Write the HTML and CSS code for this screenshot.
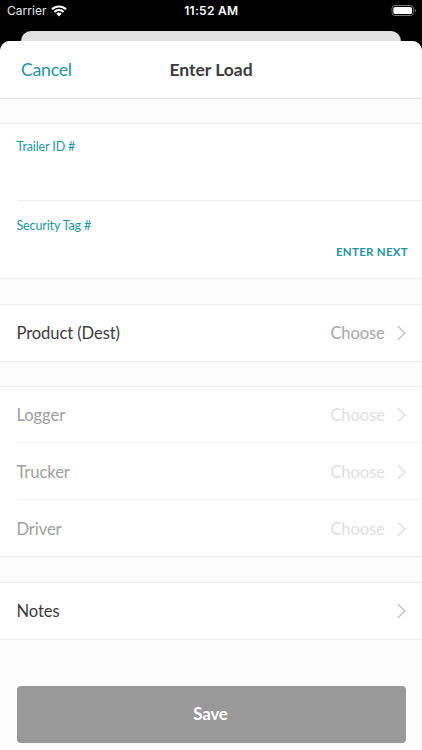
FILE: index.html
```html
<!DOCTYPE html>
<html lang="en">
<head>
<meta charset="utf-8">
<title>Enter Load</title>
<link rel="stylesheet" href="styles.css">
</head>
<body>
<div class="status">
  <div class="carrier"><span>Carrier</span>
    <svg width="16" height="12" viewBox="0 0 16 12" fill="none" stroke="#fff" stroke-width="2.1"><path d="M1 4.3A10 10 0 0 1 15 4.3M3.4 6.9A6.6 6.6 0 0 1 12.6 6.9"/><path d="M5.4 8.8A3.8 3.8 0 0 1 10.6 8.8L8 11.5Z" fill="#fff" stroke="none"/></svg>
  </div>
  <span class="time">11:52 AM</span>
  <svg class="battery" width="26" height="12" viewBox="0 0 26 12"><rect x="1" y=".5" width="21.4" height="10" rx="3" fill="none" stroke="#777"/><rect x="2.4" y="1.9" width="18.6" height="7.2" rx="1.7" fill="#fff"/><path d="M23.8 3.8Q25 4.3 25 5.5T23.8 7.2Z" fill="#777"/></svg>
</div>
<div class="back-card"></div>
<main class="sheet">
  <header class="header"><span class="cancel">Cancel</span><h1 class="title">Enter Load</h1><span></span></header>
  <section class="group fields">
    <div class="field trailer"><label>Trailer ID #</label></div>
    <div class="field tag"><label>Security Tag #</label><span class="next">ENTER NEXT</span></div>
  </section>
  <section class="group">
    <div class="row"><span class="name">Product (Dest)</span><span class="choose">Choose</span><svg class="chevron" width="9" height="16" viewBox="0 0 9 16"><path d="M1 1.2L7.8 8L1 14.8"/></svg></div>
  </section>
  <section class="group disabled">
    <div class="row"><span class="name">Logger</span><span class="choose">Choose</span><svg class="chevron" width="9" height="16" viewBox="0 0 9 16"><path d="M1 1.2L7.8 8L1 14.8"/></svg></div>
    <div class="row"><span class="name">Trucker</span><span class="choose">Choose</span><svg class="chevron" width="9" height="16" viewBox="0 0 9 16"><path d="M1 1.2L7.8 8L1 14.8"/></svg></div>
    <div class="row"><span class="name">Driver</span><span class="choose">Choose</span><svg class="chevron" width="9" height="16" viewBox="0 0 9 16"><path d="M1 1.2L7.8 8L1 14.8"/></svg></div>
  </section>
  <section class="group">
    <div class="row"><span class="name">Notes</span><svg class="chevron" width="9" height="16" viewBox="0 0 9 16"><path d="M1 1.2L7.8 8L1 14.8"/></svg></div>
  </section>
  <button class="save">Save</button>
</main>
</body>
</html>
```
FILE: styles.css
```css
* { box-sizing: border-box; }
body {
  margin: 0;
  height: 750px;
  overflow: hidden;
  background: #000;
  color: #3c3c3e;
  font-family: Lato, sans-serif;
  font-size: 16.6px;
}
.status {
  display: grid;
  grid-template-columns: 1fr auto 1fr;
  align-items: center;
  height: 31px;
  padding: 0 5px 9px 7px;
  color: #fff;
  font: 12px/22px Inter, sans-serif;
}
.carrier { display: flex; align-items: center; gap: 4px; letter-spacing: .05px; color: #e8e8e8; }
.time { position: relative; left: -.7px; font-weight: 600; letter-spacing: .3px; }
.battery { justify-self: end; }
.back-card {
  height: 10px;
  margin: 0 21px;
  border-radius: 10px 10px 0 0;
  background: #e1e1e1;
}
.sheet {
  height: 709px;
  border-radius: 10px 10px 0 0;
  background: #fcfcfc;
  overflow: hidden;
}
.header {
  display: grid;
  grid-template-columns: 1fr auto 1fr;
  align-items: center;
  height: 58px;
  padding: 0 21px 1px;
  background: #fff;
  border-bottom: 1px solid #e2e2e2;
}
.cancel { color: #2196a6; font-size: 17.7px; letter-spacing: -.25px; }
.title { margin: 0; font-size: 17.5px; font-weight: 700; letter-spacing: -.02px; }
.group {
  margin-top: 25px;
  padding-left: 16.5px;
  background: #fff;
  border-top: 1px solid #ededed;
  border-bottom: 1px solid #ededed;
}
.fields { margin-top: 24px; }
.field { display: flex; flex-direction: column; color: #2196a6; font-size: 12.5px; line-height: 16px; letter-spacing: -.12px; }
.trailer { height: 77px; padding-top: 15px; border-bottom: 1px solid #ededed; }
.tag { height: 77px; padding: 17px 14px 0 0; }
.next { align-self: flex-end; margin-top: 11px; font-size: 11.5px; line-height: 14px; font-weight: 700; letter-spacing: .28px; }
.row {
  display: flex;
  align-items: center;
  height: 56px;
  padding-right: 16px;
}
.name { flex: 1; letter-spacing: -.1px; }
.name, .choose { line-height: 20px; padding-bottom: 1px; }
.choose { margin-right: 12.5px; color: #a8a8a8; letter-spacing: -.18px; }
.chevron { fill: none; stroke: #c6c6c8; stroke-width: 1.5; }
.disabled { margin-top: 24px; }
.disabled .row:first-child { height: 55px; }
.disabled .row + .row { height: 57px; padding-top: 1px; border-top: 1px solid #f3f3f3; }
.disabled .name, .disabled .choose { padding: 0; }
.disabled .name { color: #a0a0a0; }
.disabled .choose { color: #e0e0e2; }
.disabled .chevron { stroke: #dedee0; }
.save {
  display: block;
  width: 389px;
  height: 57px;
  margin: 45.5px 0 0 16.5px;
  padding: 0 1px 1px 0;
  border: 0;
  border-radius: 4px;
  background: #999;
  color: #fff;
  font: 700 16.7px Lato, sans-serif;
  letter-spacing: -.1px;
}
```
